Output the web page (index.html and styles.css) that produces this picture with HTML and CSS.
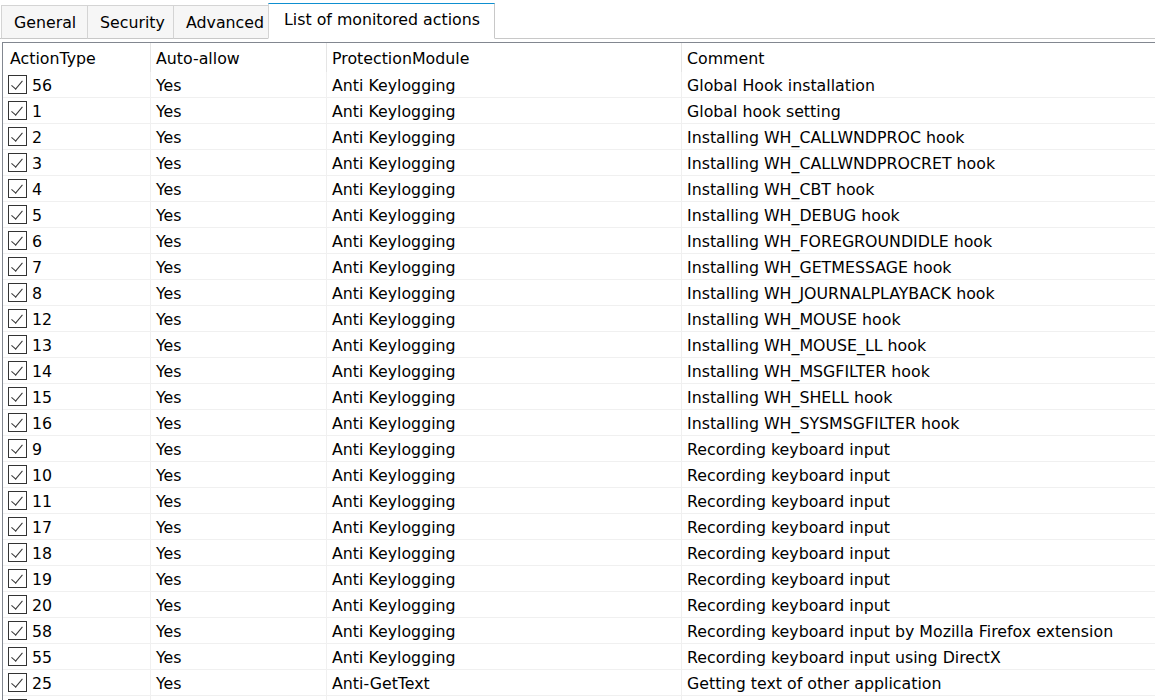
FILE: index.html
```html
<!DOCTYPE html>
<html>
<head>
<meta charset="utf-8">
<link rel="stylesheet" href="styles.css">
</head>
<body>
<div class="tabstrip">
  <div class="tab">General</div>
  <div class="tab">Security</div>
  <div class="tab">Advanced</div>
  <div class="tab active">List of monitored actions</div>
</div>
<div class="panel">
  <div class="grid">
    <div class="hc c1">ActionType</div><div class="hc">Auto-allow</div><div class="hc">ProtectionModule</div><div class="hc last">Comment</div>

    <div class="c c1"><span class="cb"></span>56</div><div class="c">Yes</div><div class="c">Anti Keylogging</div><div class="c last">Global Hook installation</div>
    <div class="c c1"><span class="cb"></span>1</div><div class="c">Yes</div><div class="c">Anti Keylogging</div><div class="c last">Global hook setting</div>
    <div class="c c1"><span class="cb"></span>2</div><div class="c">Yes</div><div class="c">Anti Keylogging</div><div class="c last">Installing WH_CALLWNDPROC hook</div>
    <div class="c c1"><span class="cb"></span>3</div><div class="c">Yes</div><div class="c">Anti Keylogging</div><div class="c last">Installing WH_CALLWNDPROCRET hook</div>
    <div class="c c1"><span class="cb"></span>4</div><div class="c">Yes</div><div class="c">Anti Keylogging</div><div class="c last">Installing WH_CBT hook</div>
    <div class="c c1"><span class="cb"></span>5</div><div class="c">Yes</div><div class="c">Anti Keylogging</div><div class="c last">Installing WH_DEBUG hook</div>
    <div class="c c1"><span class="cb"></span>6</div><div class="c">Yes</div><div class="c">Anti Keylogging</div><div class="c last">Installing WH_FOREGROUNDIDLE hook</div>
    <div class="c c1"><span class="cb"></span>7</div><div class="c">Yes</div><div class="c">Anti Keylogging</div><div class="c last">Installing WH_GETMESSAGE hook</div>
    <div class="c c1"><span class="cb"></span>8</div><div class="c">Yes</div><div class="c">Anti Keylogging</div><div class="c last">Installing WH_JOURNALPLAYBACK hook</div>
    <div class="c c1"><span class="cb"></span>12</div><div class="c">Yes</div><div class="c">Anti Keylogging</div><div class="c last">Installing WH_MOUSE hook</div>
    <div class="c c1"><span class="cb"></span>13</div><div class="c">Yes</div><div class="c">Anti Keylogging</div><div class="c last">Installing WH_MOUSE_LL hook</div>
    <div class="c c1"><span class="cb"></span>14</div><div class="c">Yes</div><div class="c">Anti Keylogging</div><div class="c last">Installing WH_MSGFILTER hook</div>
    <div class="c c1"><span class="cb"></span>15</div><div class="c">Yes</div><div class="c">Anti Keylogging</div><div class="c last">Installing WH_SHELL hook</div>
    <div class="c c1"><span class="cb"></span>16</div><div class="c">Yes</div><div class="c">Anti Keylogging</div><div class="c last">Installing WH_SYSMSGFILTER hook</div>
    <div class="c c1"><span class="cb"></span>9</div><div class="c">Yes</div><div class="c">Anti Keylogging</div><div class="c last">Recording keyboard input</div>
    <div class="c c1"><span class="cb"></span>10</div><div class="c">Yes</div><div class="c">Anti Keylogging</div><div class="c last">Recording keyboard input</div>
    <div class="c c1"><span class="cb"></span>11</div><div class="c">Yes</div><div class="c">Anti Keylogging</div><div class="c last">Recording keyboard input</div>
    <div class="c c1"><span class="cb"></span>17</div><div class="c">Yes</div><div class="c">Anti Keylogging</div><div class="c last">Recording keyboard input</div>
    <div class="c c1"><span class="cb"></span>18</div><div class="c">Yes</div><div class="c">Anti Keylogging</div><div class="c last">Recording keyboard input</div>
    <div class="c c1"><span class="cb"></span>19</div><div class="c">Yes</div><div class="c">Anti Keylogging</div><div class="c last">Recording keyboard input</div>
    <div class="c c1"><span class="cb"></span>20</div><div class="c">Yes</div><div class="c">Anti Keylogging</div><div class="c last">Recording keyboard input</div>
    <div class="c c1"><span class="cb"></span>58</div><div class="c">Yes</div><div class="c">Anti Keylogging</div><div class="c last">Recording keyboard input by Mozilla Firefox extension</div>
    <div class="c c1"><span class="cb"></span>55</div><div class="c">Yes</div><div class="c">Anti Keylogging</div><div class="c last">Recording keyboard input using DirectX</div>
    <div class="c c1"><span class="cb"></span>25</div><div class="c">Yes</div><div class="c">Anti-GetText</div><div class="c last">Getting text of other application</div>
    <div class="c c1"><span class="cb"></span></div><div class="c"></div><div class="c"></div><div class="c last"></div>
  </div>
</div>
</body>
</html>
```
FILE: styles.css
```css
html, body {
  margin: 0;
  padding: 0;
  background: #ffffff;
  overflow: hidden;
  height: 700px;
}
body {
  font-family: "DejaVu Sans", Tahoma, sans-serif;
  font-size: 15.8px;
  color: #000000;
}
.tabstrip {
  display: flex;
  align-items: flex-end;
  height: 38px;
  border-bottom: 1px solid #c8c8c8;
  padding-left: 1px;
}
.tab {
  box-sizing: border-box;
  height: 34px;
  margin-bottom: -1px;
  padding: 0 12px;
  display: flex;
  align-items: center;
  background: #f6f6f6;
  border: 1px solid #d4d4d4;
  border-right: none;
  border-bottom: 1px solid #c8c8c8;
  white-space: nowrap;
}
.tab:nth-child(1) { width: 86px; }
.tab:nth-child(2) { width: 86px; }
.tab:nth-child(3) { width: 95px; }
.tab.active {
  width: 227px;
  height: 36px;
  padding: 0 0 0 15px;
  align-items: flex-start;
  padding-top: 6px;
  background: #ffffff;
  border-top: 1px solid #0e8fd0;
  border-right: 1px solid #c8c8c8;
  border-bottom: 1px solid #ffffff;
}
.panel {
  margin-top: 3px;
  margin-left: 2px;
  border-top: 1px solid #828790;
  border-left: 1px solid #828790;
}
.grid {
  display: grid;
  grid-template-columns: 148px 176px 355px 1fr;
  grid-auto-rows: 26px;
  grid-template-rows: 29px;
}
.hc {
  display: flex;
  align-items: center;
  padding-left: 5px;
  padding-top: 2px;
  border-right: 1px solid #e5e5e5;
  white-space: nowrap;
}
.c {
  display: flex;
  align-items: center;
  padding-left: 5px;
  padding-top: 2px;
  border-right: 1px solid #f0f0f0;
  border-bottom: 1px solid #f0f0f0;
  white-space: nowrap;
}
.hc.c1 { padding-left: 7px; }
.c.c1 { padding-left: 5px; }
.last { border-right: none; }
.cb {
  box-sizing: border-box;
  width: 19px;
  height: 19px;
  border: 1px solid #333333;
  margin-right: 5px;
  margin-top: -2px;
  position: relative;
  flex: none;
}
.cb::after {
  content: "";
  position: absolute;
  left: 5px;
  top: 2px;
  width: 5px;
  height: 10px;
  border-right: 1px solid #333333;
  border-bottom: 1px solid #333333;
  transform: rotate(40deg);
}
```
